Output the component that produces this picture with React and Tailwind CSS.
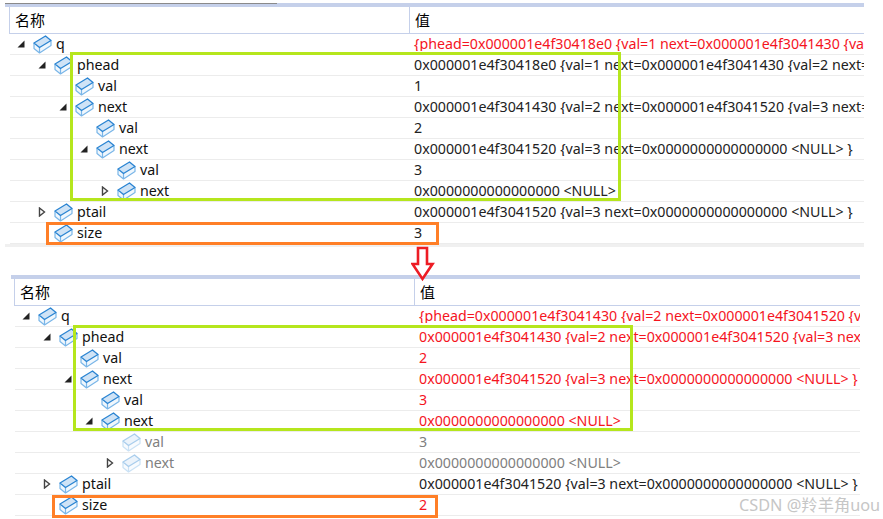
const a1 = "0x000001e4f3041430";
const a2 = "0x000001e4f3041520";
const a0 = "0x000001e4f30418e0";
const nul = "0x0000000000000000";

const topRows = [
  { name: "q", depth: 0, arrow: "open", red: true, value: `{phead=${a0} {val=1 next=${a1} {val=2 next=${a2} {val=3 next=${nul} <NULL> }}}` },
  { name: "phead", depth: 1, arrow: "open", value: `${a0} {val=1 next=${a1} {val=2 next=${a2} {val=3 next=${nul} <NULL> }}}` },
  { name: "val", depth: 2, value: "1" },
  { name: "next", depth: 2, arrow: "open", value: `${a1} {val=2 next=${a2} {val=3 next=${nul} <NULL> }}` },
  { name: "val", depth: 3, value: "2" },
  { name: "next", depth: 3, arrow: "open", value: `${a2} {val=3 next=${nul} <NULL> }` },
  { name: "val", depth: 4, value: "3" },
  { name: "next", depth: 4, arrow: "closed", value: `${nul} <NULL>` },
  { name: "ptail", depth: 1, arrow: "closed", value: `${a2} {val=3 next=${nul} <NULL> }` },
  { name: "size", depth: 1, value: "3" },
];

const bottomRows = [
  { name: "q", depth: 0, arrow: "open", red: true, value: `{phead=${a1} {val=2 next=${a2} {val=3 next=${nul} <NULL> }}}` },
  { name: "phead", depth: 1, arrow: "open", red: true, value: `${a1} {val=2 next=${a2} {val=3 next=${nul} <NULL> }}` },
  { name: "val", depth: 2, red: true, value: "2" },
  { name: "next", depth: 2, arrow: "open", red: true, value: `${a2} {val=3 next=${nul} <NULL> }` },
  { name: "val", depth: 3, red: true, value: "3" },
  { name: "next", depth: 3, arrow: "open", red: true, value: `${nul} <NULL>` },
  { name: "val", depth: 4, dim: true, value: "3" },
  { name: "next", depth: 4, arrow: "closed", dim: true, value: `${nul} <NULL>` },
  { name: "ptail", depth: 1, arrow: "closed", value: `${a2} {val=3 next=${nul} <NULL> }` },
  { name: "size", depth: 1, red: true, value: "2" },
];

function BoxIcon({ dim }) {
  return (
    <svg width="19" height="19" viewBox="0 0 19 19" className={`shrink-0 ${dim ? "opacity-40" : ""}`}>
      <path d="M1 8 L12.5 1 L18 5.5 L6.5 12.5 Z" fill="#cfe3f6" />
      <path d="M1 8 L6.5 12.5 L18 5.5 L18 10.5 L6.5 18 L1 13.5 Z" fill="#f0f7fd" />
      <path
        d="M1 8 L1 13.5 L6.5 18 L18 10.5 L18 5.5 M6.5 12.5 L6.5 18"
        fill="none"
        stroke="#7ab6e8"
        strokeWidth="1.2"
        strokeLinejoin="round"
      />
      <path
        d="M1 8 L12.5 1 L18 5.5 L6.5 12.5 Z"
        fill="none"
        stroke="#2a84d2"
        strokeWidth="1.3"
        strokeLinejoin="round"
      />
    </svg>
  );
}

function Arrow({ type }) {
  if (type === "open") {
    return (
      <svg width="8" height="8" viewBox="0 0 8 8">
        <path d="M7.5 0.5 L7.5 7.5 L0.5 7.5 Z" fill="#222222" />
      </svg>
    );
  }
  if (type === "closed") {
    return (
      <svg width="8" height="10" viewBox="0 0 8 10">
        <path d="M1.5 1 L6.5 5 L1.5 9 Z" fill="#ffffff" stroke="#444444" strokeWidth="1.4" />
      </svg>
    );
  }
  return null;
}

const indents = ["pl-[7px]", "pl-[28px]", "pl-[49px]", "pl-[70px]", "pl-[91px]"];

function Row({ row }) {
  return (
    <div className="ml-[5px] flex h-[21px] items-center border-b border-[#ececec]">
      <div className={`flex h-full w-[399px] shrink-0 items-center ${indents[row.depth]}`}>
        <span className="flex w-[16px] shrink-0 items-center">
          <Arrow type={row.arrow} />
        </span>
        <BoxIcon dim={row.dim} />
        <span className={`ml-[4px] ${row.dim ? "text-[#808080]" : "text-[#111]"}`}>{row.name}</span>
      </div>
      <div
        className={`min-w-0 flex-1 overflow-hidden whitespace-nowrap pl-[5px] ${
          row.red ? "text-[#f5141e]" : row.dim ? "text-[#808080]" : "text-[#222]"
        }`}
      >
        {row.value}
      </div>
    </div>
  );
}

function Panel({ rows, className, children }) {
  return (
    <div className={className}>
      {children}
      <div className="ml-[4px] flex h-[27px] items-center border-b border-[#c5d0ea] text-[15px]">
        <div className="flex h-full w-[400px] shrink-0 items-center border-l border-[#c5d0ea] pl-[5px]">名称</div>
        <div className="flex h-full flex-1 items-center border-l border-[#c5d0ea] pl-[5px]">值</div>
      </div>
      {rows.map((row, i) => (
        <Row key={i} row={row} />
      ))}
    </div>
  );
}

export default function App() {
  return (
    <div className="relative h-[519px] w-[883px] overflow-hidden bg-white pt-[3px] font-['Noto_Sans','Noto_Sans_CJK_SC',sans-serif] text-[14.23px] leading-none">
      <Panel rows={topRows} className="ml-[5px] w-[859px]">
        <div className="h-[4px] bg-[#c5d0ea]">
          <div className="h-px w-[272px] bg-[#8a8a8a]" />
        </div>
      </Panel>
      <div className="ml-[5px] h-[3px] w-[859px] bg-[#f0f0f0]" />

      <Panel rows={bottomRows} className="ml-[10px] mt-[28px] w-[850px]">
        <div className="ml-px h-[4px] bg-[#c5d0ea]" />
      </Panel>

      <div className="absolute left-[70px] top-[52px] h-[149px] w-[551px] border-[3px] border-[#b5e61d]" />
      <div className="absolute left-[46px] top-[222px] h-[23px] w-[393px] border-[3px] border-[#ff7f27]" />
      <div className="absolute left-[73px] top-[325px] h-[106px] w-[560px] border-[3px] border-[#b5e61d]" />
      <div className="absolute left-[52px] top-[495px] h-[23px] w-[386px] border-[3px] border-[#ff7f27]" />

      <svg className="absolute left-[411px] top-[246px]" width="24" height="36" viewBox="0 0 24 36">
        <path d="M7 2 L16 2 L16 18 L21.5 18 L11.5 33 L1.5 18 L7 18 Z" fill="#ffffff" stroke="#ed1c24" strokeWidth="2.6" />
      </svg>

      <div className="absolute left-[739px] top-[497px] whitespace-nowrap text-[16.3px] text-[#c6c6c6]">CSDN @羚羊角uou</div>
    </div>
  );
}
